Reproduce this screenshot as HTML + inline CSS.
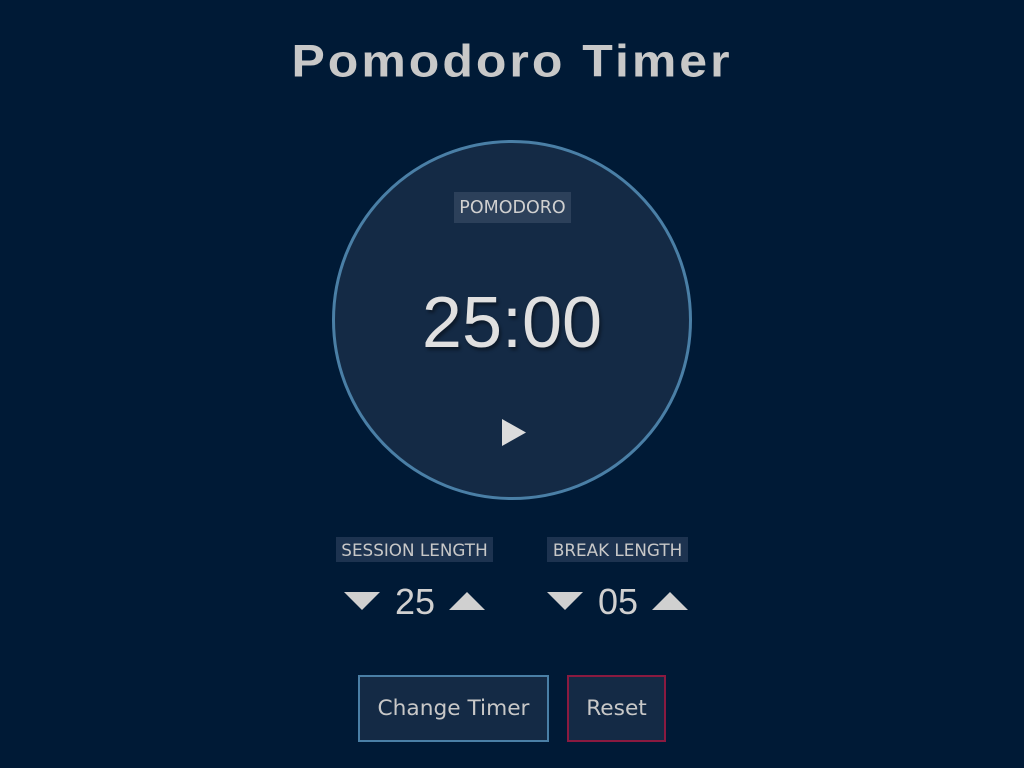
<!DOCTYPE html>
<html><head><style>
body{margin:0;width:1024px;height:768px;background:#001a36;font-family:"DejaVu Sans","Liberation Sans",sans-serif;color:#d8d8d8;position:relative;overflow:hidden}
.a{position:absolute}
h1{position:absolute;left:0;width:1024px;top:32px;margin:0;text-align:center;font:bold 50px "Liberation Sans",sans-serif;letter-spacing:3px;color:#c8c8c8;transform:scaleY(0.9)}
.circle{left:332px;top:140px;width:354px;height:354px;border:3px solid #4a7fa6;border-radius:50%;background:#142a45}
.lbl{background:#2c405a;font-size:17.5px;text-align:center;line-height:33px;color:#d0d0d0}
.lbl2{background:#1d3350;font-size:16.8px;text-align:center;line-height:26px;color:#c8c8c8}
.num{font:36px "Liberation Sans",sans-serif;color:#d0d0d0;line-height:36px}
.btn{border:2px solid #4a7fa6;background:#142a45;box-sizing:border-box;text-align:center;font-size:21.7px;color:#c8c8c8}
</style></head><body>
<h1>Pomodoro Timer</h1>
<div class="a circle"></div>
<div class="a lbl" style="left:454px;top:192px;width:117px;height:31px">POMODORO</div>
<div class="a" style="left:0;width:1024px;top:282px;text-align:center;font:72px 'Liberation Sans',sans-serif;color:#e0e0e0;text-shadow:2px 3px 3px rgba(0,0,0,0.4)">25:00</div>
<svg class="a" style="left:502px;top:419px" width="24" height="27"><polygon points="0,0 24,13.5 0,27" fill="#dcdcdc"/></svg>
<div class="a lbl2" style="left:336px;top:537px;width:157px;height:25px">SESSION LENGTH</div>
<div class="a lbl2" style="left:547px;top:537px;width:141px;height:25px">BREAK LENGTH</div>
<svg class="a" style="left:344px;top:592px" width="36" height="18"><polygon points="0,0 36,0 18,18" fill="#d0d0d0"/></svg>
<div class="a num" style="left:395px;top:584px">25</div>
<svg class="a" style="left:449px;top:592px" width="36" height="18"><polygon points="0,18 36,18 18,0" fill="#d0d0d0"/></svg>
<svg class="a" style="left:547px;top:592px" width="36" height="18"><polygon points="0,0 36,0 18,18" fill="#d0d0d0"/></svg>
<div class="a num" style="left:598px;top:584px">05</div>
<svg class="a" style="left:652px;top:592px" width="36" height="18"><polygon points="0,18 36,18 18,0" fill="#d0d0d0"/></svg>
<div class="a btn" style="left:358px;top:675px;width:191px;height:67px;line-height:64px">Change Timer</div>
<div class="a btn" style="left:567px;top:675px;width:99px;height:67px;line-height:64px;border-color:#8a1a40">Reset</div>
</body></html>
